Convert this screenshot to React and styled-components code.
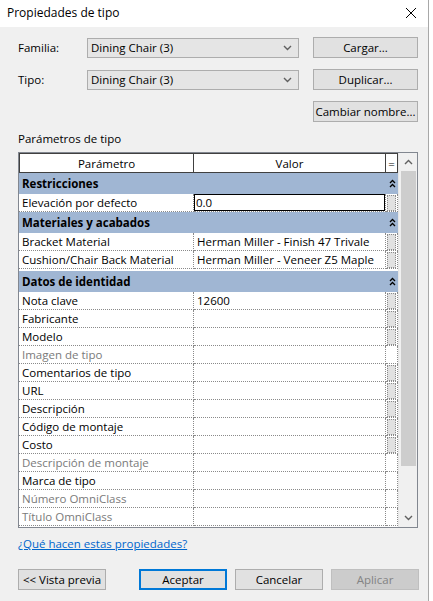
import React from "react";
import styled, { createGlobalStyle } from "styled-components";

const GlobalStyle = createGlobalStyle`
  html, body {
    margin: 0;
    padding: 0;
    background: #ffffff;
  }
  body {
    font-family: "Open Sans", "Noto Sans", "DejaVu Sans", sans-serif;
    font-size: 11.5px;
    color: #000;
  }
  * {
    box-sizing: border-box;
  }
`;

const Window = styled.div`
  width: 429px;
  height: 601px;
  border-right: 1px solid #a8a8a8;
  display: flex;
  flex-direction: column;
  background: #f0f0f0;
`;

const TitleBar = styled.div`
  height: 27px;
  background: #fff;
  display: flex;
  align-items: center;
  justify-content: space-between;
  padding: 0 11px 2px 7px;
  font-size: 12px;
`;

const Body = styled.div`
  flex: 1;
  padding: 10px 10px 0 18px;
  display: flex;
  flex-direction: column;
`;

const FormGrid = styled.div`
  display: grid;
  grid-template-columns: 55px 212px 105px;
  column-gap: 14px;
  row-gap: 11px;
  align-items: center;
`;

const FieldLabel = styled.div`
  padding-left: 0;
`;

const Select = styled.div`
  height: 20px;
  border: 1px solid #adadad;
  background: #e5e5e5;
  display: flex;
  align-items: center;
  justify-content: space-between;
  padding: 0 6px 0 3px;
`;

const Button = styled.div`
  height: ${(p) => (p.$tall ? "21px" : "21px")};
  border: ${(p) => (p.$primary ? "2px solid #0078d7" : "1px solid #adadad")};
  background: ${(p) => (p.$disabled ? "#cccccc" : "#e1e1e1")};
  border-color: ${(p) => (p.$disabled ? "#bfbfbf" : p.$primary ? "#0078d7" : "#adadad")};
  color: ${(p) => (p.$disabled ? "#838383" : "#000")};
  display: flex;
  align-items: center;
  justify-content: center;
  width: ${(p) => p.$width || "auto"};
  margin-left: ${(p) => p.$offset || "0"};
`;

const SectionLabel = styled.div`
  margin-top: 9px;
  height: 16px;
  line-height: 16px;
`;

const Table = styled.div`
  margin-top: 5px;
  width: 400px;
  height: 376px;
  border: 1px solid #828790;
  display: flex;
  background: #fff;
`;

const RowsArea = styled.div`
  width: 379px;
  overflow: hidden;
  display: grid;
  grid-template-columns: 175px 192px 12px;
  grid-auto-rows: min-content;
  align-content: start;
`;

const HeadCell = styled.div`
  height: 20px;
  border-right: 1px solid #404040;
  border-bottom: 1px solid #404040;
  border-top: 1px solid #404040;
  border-left: ${(p) => (p.$first ? "1px solid #404040" : "none")};
  display: flex;
  align-items: center;
  justify-content: center;
  background: #fff;
`;

const Band = styled.div`
  grid-column: 1 / 4;
  height: 21px;
  margin-top: ${(p) => (p.$gap ? "2px" : "0")};
  background: #a0b6d3;
  display: grid;
  grid-template-columns: 367px 12px;
  align-items: center;
  font-weight: 700;
  padding-left: 3px;
`;

const Cell = styled.div`
  height: 18px;
  border-bottom: 1px dotted #8a8a8a;
  border-right: 1px dotted #8a8a8a;
  display: flex;
  align-items: center;
  padding-left: ${(p) => (p.$pad ? "3px" : "0")};
  color: ${(p) => (p.$muted ? "#7a7a7a" : "#000")};
  white-space: nowrap;
  overflow: hidden;
`;

const ValueInput = styled.div`
  height: 17px;
  width: 191px;
  border: 1px solid #000;
  display: flex;
  align-items: center;
  padding-left: 1px;
`;

const EditBtn = styled.div`
  width: 9px;
  height: 16px;
  margin-left: 1px;
  background: #e1e1e1;
  border: 1px dotted #8a8a8a;
`;

const Scroll = styled.div`
  width: 19px;
  background: #f0f0f0;
  border-left: 1px solid #e6e6e6;
  display: flex;
  flex-direction: column;
  align-items: center;
  padding: 0 0 0 1px;
`;

const ArrowBox = styled.div`
  height: 18px;
  width: 17px;
  display: flex;
  align-items: center;
  justify-content: center;
`;

const Thumb = styled.div`
  width: 15px;
  height: 295px;
  background: #cdcdcd;
`;

const ScrollSpace = styled.div`
  flex: 1;
`;

const HelpLink = styled.a`
  margin-top: 8px;
  color: #0066cc;
  text-decoration: underline;
  height: 16px;
  line-height: 16px;
  cursor: pointer;
`;

const Footer = styled.div`
  margin-top: 17px;
  display: flex;
  width: 401px;
`;

const Chevron = ({ dir = "down" }) => (
  <svg width="9" height="6" viewBox="0 0 9 6">
    <path
      d={dir === "down" ? "M1 1 L4.5 4.5 L8 1" : "M1 5 L4.5 1.5 L8 5"}
      fill="none"
      stroke="#606060"
      strokeWidth="1.4"
    />
  </svg>
);

const DoubleUp = () => (
  <svg width="7" height="9" viewBox="0 0 7 9">
    <path d="M1 4 L3.5 1.5 L6 4 M1 8 L3.5 5.5 L6 8" fill="none" stroke="#000" strokeWidth="1.3" />
  </svg>
);

const CloseX = () => (
  <svg width="12" height="12" viewBox="0 0 12 12">
    <path d="M1 1 L11 11 M11 1 L1 11" stroke="#000" strokeWidth="1" />
  </svg>
);

const groups = [
  {
    name: "Restricciones",
    rows: [{ name: "Elevación por defecto", value: "0.0", input: true, btn: true }],
  },
  {
    name: "Materiales y acabados",
    rows: [
      { name: "Bracket Material", value: "Herman Miller - Finish 47 Trivale", btn: true },
      { name: "Cushion/Chair Back Material", value: "Herman Miller - Veneer Z5 Maple", btn: true },
    ],
  },
  {
    name: "Datos de identidad",
    gap: true,
    rows: [
      { name: "Nota clave", value: "12600", btn: true },
      { name: "Fabricante", btn: true },
      { name: "Modelo", btn: true },
      { name: "Imagen de tipo", muted: true },
      { name: "Comentarios de tipo", btn: true },
      { name: "URL", btn: true },
      { name: "Descripción", btn: true },
      { name: "Código de montaje", btn: true },
      { name: "Costo", btn: true },
      { name: "Descripción de montaje", muted: true },
      { name: "Marca de tipo" },
      { name: "Número OmniClass", muted: true },
      { name: "Título OmniClass", muted: true },
    ],
  },
];

const App = () => {
  return (
    <>
      <GlobalStyle />
      <Window>
        <TitleBar>
          <span>Propiedades de tipo</span>
          <CloseX />
        </TitleBar>
        <Body>
          <FormGrid>
            <FieldLabel>Familia:</FieldLabel>
            <Select>
              <span>Dining Chair (3)</span>
              <Chevron />
            </Select>
            <Button>Cargar...</Button>

            <FieldLabel>Tipo:</FieldLabel>
            <Select>
              <span>Dining Chair (3)</span>
              <Chevron />
            </Select>
            <Button>Duplicar...</Button>

            <div />
            <div />
            <Button>Cambiar nombre...</Button>
          </FormGrid>

          <SectionLabel>Parámetros de tipo</SectionLabel>

          <Table>
            <RowsArea>
              <HeadCell $first>Parámetro</HeadCell>
              <HeadCell>Valor</HeadCell>
              <HeadCell>=</HeadCell>
              {groups.map((g) => (
                <React.Fragment key={g.name}>
                  <Band $gap={g.gap}>
                    <span>{g.name}</span>
                    <DoubleUp />
                  </Band>
                  {g.rows.map((r) => (
                    <React.Fragment key={r.name}>
                      <Cell $pad $muted={r.muted}>{r.name}</Cell>
                      <Cell $pad={!r.input}>
                        {r.input ? <ValueInput>{r.value}</ValueInput> : r.value}
                      </Cell>
                      <Cell>{r.btn && <EditBtn />}</Cell>
                    </React.Fragment>
                  ))}
                </React.Fragment>
              ))}
            </RowsArea>
            <Scroll>
              <ArrowBox>
                <Chevron dir="up" />
              </ArrowBox>
              <Thumb />
              <ScrollSpace />
              <ArrowBox>
                <Chevron />
              </ArrowBox>
            </Scroll>
          </Table>

          <HelpLink>¿Qué hacen estas propiedades?</HelpLink>

          <Footer>
            <Button $width="88px">&lt;&lt; Vista previa</Button>
            <Button $width="88px" $offset="33px" $primary>Aceptar</Button>
            <Button $width="88px" $offset="8px">Cancelar</Button>
            <Button $width="88px" $offset="8px" $disabled>Aplicar</Button>
          </Footer>
        </Body>
      </Window>
    </>
  );
};

export default App;
